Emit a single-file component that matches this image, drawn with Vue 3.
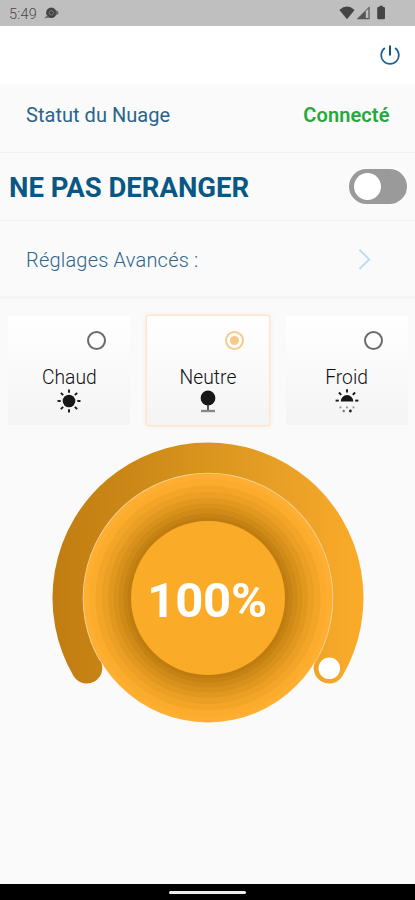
<script setup>
import { ref } from 'vue'

const level = ref(100)
const selected = ref('neutre')
const doNotDisturb = ref(false)
const modes = [
  { id: 'chaud', label: 'Chaud' },
  { id: 'neutre', label: 'Neutre' },
  { id: 'froid', label: 'Froid' },
]
const rays = [0, 45, 90, 135, 180, 225, 270, 315]
const halfRays = [-90, -45, 0, 45, 90]
const rings = [
  { r: 124.5, c: '#feaf32' },
  { r: 119, c: '#fbac2d' },
  { r: 112.5, c: '#f3a528' },
  { r: 106, c: '#eb9f24' },
  { r: 100, c: '#e2981f' },
  { r: 94.5, c: '#d8911a' },
  { r: 89.5, c: '#cf8a17' },
  { r: 84.5, c: '#c68314' },
  { r: 80.5, c: '#bf7d11' },
]
</script>

<template>
  <div class="phone">
    <header class="status-bar">
      <span class="time">5:49</span>
      <svg class="gear" width="15" height="14" viewBox="0 0 15 14">
        <circle cx="7.3" cy="6.8" r="5.2" fill="#434343" />
        <circle cx="7.3" cy="6.8" r="2.2" fill="none" stroke="#7a7a7a" />
        <path d="M.2 12.2 3.6 8.8l1.6 3zM11.5 4l2.8 1.4v2.8l-2.4.8z" fill="#6a6a6a" />
      </svg>
      <svg class="signals" width="48" height="16" viewBox="0 0 48 16">
        <path d="M.4 5Q8-1.8 15.6 5L8 14.2z" fill="#454545" />
        <path d="M17.6 14.2 30.6 1.2v13z" fill="#555" />
        <path d="M26.8 6.2 29.4 3.6v9.3h-2.6z" fill="#bfbfbf" />
        <path d="M38.2 3.2q0-1.2 1.2-1.2h1V.7h3.4V2h1q1.2 0 1.2 1.2v9.8q0 1.2-1.2 1.2h-5.4q-1.2 0-1.2-1.2z" fill="#454545" />
      </svg>
    </header>

    <div class="app-bar">
      <svg width="22" height="22" viewBox="0 0 22 22" fill="none" stroke="#1c6294" stroke-width="1.7">
        <path d="M5.9 4A8.8 8.8 0 1 0 16.1 4" />
        <path d="M11 1.6v10" stroke="#174f83" stroke-width="2" />
      </svg>
    </div>

    <div class="row cloud">
      <span class="label">Statut du Nuage</span>
      <span class="connected">Connecté</span>
    </div>

    <div class="row disturb">
      <span class="title">NE PAS DERANGER</span>
      <button class="toggle" :class="{ on: doNotDisturb }" @click="doNotDisturb = !doNotDisturb">
        <span class="thumb"></span>
      </button>
    </div>

    <div class="row advanced">
      <span class="label light">Réglages Avancés :</span>
      <svg width="14" height="22" viewBox="0 0 14 22" fill="none" stroke="#c1dbee" stroke-width="1.9">
        <path d="M1.4 1.8 11.2 11.4 1.4 21" />
      </svg>
    </div>

    <div class="modes">
      <div
        v-for="mode in modes"
        :key="mode.id"
        class="card"
        :class="{ selected: selected === mode.id }"
        @click="selected = mode.id"
      >
        <span class="radio"></span>
        <span class="mode-label">{{ mode.label }}</span>
        <svg v-if="mode.id === 'chaud'" width="26" height="26" viewBox="-13 -13 26 26">
          <circle r="6.3" fill="#171717" />
          <path v-for="a in rays" :key="a" d="M0-11.5v3.2" :transform="`rotate(${a})`" stroke="#171717" stroke-width="1.9" />
        </svg>
        <svg v-else-if="mode.id === 'neutre'" width="26" height="26" viewBox="-13 -13 26 26">
          <circle cy="-3" r="7.4" fill="#171717" />
          <path d="M0 4v5" stroke="#444" stroke-width="1.8" />
          <path d="M-7 10H7" stroke="#888" stroke-width="2.4" />
        </svg>
        <svg v-else width="26" height="26" viewBox="-13 -13 26 26">
          <path d="M-6.3.4a6.3 6.3 0 0 1 12.6 0z" fill="#171717" />
          <path v-for="a in halfRays" :key="a" d="M0-11.4v3.2" :transform="`translate(0 -.4) rotate(${a})`" stroke="#171717" stroke-width="1.9" />
          <g fill="#999">
            <circle cx="-6.5" cy="6.4" r="1.1" />
            <circle cx="0" cy="6.4" r="1.1" />
            <circle cx="6.5" cy="6.4" r="1.1" />
            <circle cx="-3.3" cy="10" r="1.2" fill="#777" />
            <circle cx="3.4" cy="10" r="1.4" fill="#222" />
          </g>
        </svg>
      </div>
    </div>

    <div class="dial">
      <svg width="312" height="282" viewBox="-156 -156 312 282">
        <defs>
          <linearGradient id="track" gradientUnits="userSpaceOnUse" x1="-155" y1="0" x2="155" y2="0">
            <stop offset="0" stop-color="#c17d10" />
            <stop offset=".25" stop-color="#cb8817" />
            <stop offset=".5" stop-color="#da951e" />
            <stop offset=".75" stop-color="#e9a026" />
            <stop offset="1" stop-color="#fbab29" />
          </linearGradient>
        </defs>
        <path d="M-121.2 70A140 140 0 1 1 121.2 70" fill="none" stroke="url(#track)" stroke-width="31" stroke-linecap="round" />
        <path d="M-107.8 62.3A124.5 124.5 0 1 1 107.8 62.3" fill="none" stroke="#f1d3a0" stroke-width="1.6" />
        <circle v-for="ring in rings" :key="ring.r" :r="ring.r" :fill="ring.c" />
        <circle r="77" fill="#faab27" />
        <circle cx="121.3" cy="70.3" r="10.8" fill="#fff" />
        <text class="percent" x="-.8" y="18.7" text-anchor="middle" textLength="120">{{ level }}%</text>
      </svg>
    </div>

    <footer class="nav-bar"><span></span></footer>
  </div>
</template>

<style>
body {
  margin: 0;
  background: #fafafa;
}
</style>

<style scoped>
.phone {
  width: 415px;
  height: 900px;
  display: flex;
  flex-direction: column;
  overflow: hidden;
  background: #fafafa;
  font-family: Roboto, sans-serif;
}
.phone * {
  box-sizing: border-box;
}
.status-bar {
  flex: none;
  height: 26px;
  display: flex;
  align-items: center;
  padding: 0 28px 0 9px;
  background: #bfbfbf;
}
.time {
  width: 35px;
  padding-top: 2px;
  font-size: 14.5px;
  font-weight: 300;
  letter-spacing: 0.2px;
  color: #484848;
}
.signals {
  margin-left: auto;
}
.app-bar {
  flex: none;
  height: 58px;
  display: flex;
  align-items: center;
  justify-content: flex-end;
  padding: 0 14px 0 0;
  background: #fff;
}
.row {
  flex: none;
  display: flex;
  align-items: center;
  justify-content: space-between;
  border-bottom: 1px solid #f1f1f1;
}
.cloud {
  height: 69px;
  padding: 0 25.5px 6px 26px;
}
.label {
  font-size: 20px;
  letter-spacing: 0.03px;
  color: #29648c;
}
.light {
  padding-top: 2px;
  letter-spacing: 0.2px;
  color: #2f658a;
  font-weight: 300;
}
.connected {
  font-size: 20px;
  font-weight: 600;
  letter-spacing: 0.1px;
  color: #25a83c;
}
.disturb {
  height: 68px;
  padding: 0 8px 0 9px;
}
.title {
  padding-top: 1px;
  font-size: 27.5px;
  font-weight: 700;
  color: #085784;
}
.toggle {
  width: 58px;
  height: 35px;
  padding: 0 5px;
  display: flex;
  align-items: center;
  border: 0;
  border-radius: 18px;
  background: #9a9a9a;
}
.toggle.on {
  justify-content: flex-end;
  background: #085784;
}
.thumb {
  width: 27px;
  height: 27px;
  border-radius: 50%;
  background: #fff;
}
.advanced {
  height: 78px;
  padding: 1px 43px 0 26px;
  border-bottom: 3px solid #f5f5f5;
}
.modes {
  flex: none;
  height: 143px;
  display: grid;
  grid-template-columns: repeat(3, 122px);
  column-gap: 16.6px;
  padding: 17px 0 17px 8.4px;
}
.card {
  display: flex;
  flex-direction: column;
  align-items: center;
  padding-top: 15px;
  border-radius: 2px;
  background: linear-gradient(#fff, #f4f4f4);
}
.card.selected {
  box-shadow: 0 0 0 1.5px #fce6cf, 0 0 4px 2px #fcefe2;
}
.radio {
  flex: none;
  align-self: flex-end;
  width: 19px;
  height: 19px;
  margin-right: 24.5px;
  display: grid;
  place-items: center;
  border: 2px solid #6b6b6b;
  border-radius: 50%;
}
.selected .radio {
  border-color: #f5cb90;
}
.selected .radio::after {
  content: '';
  width: 9px;
  height: 9px;
  border-radius: 50%;
  background: #f5c98a;
}
.mode-label {
  margin-top: 16px;
  font-size: 19.3px;
  line-height: 24px;
  font-weight: 300;
  color: #111;
}
.card svg {
  flex: none;
  margin-top: -2.5px;
}
.dial {
  flex: none;
  height: 282px;
  display: flex;
  justify-content: center;
}
.percent {
  font-size: 49px;
  font-weight: 700;
  fill: #fff;
}
.nav-bar {
  flex: none;
  height: 16px;
  margin-top: auto;
  display: flex;
  justify-content: center;
  align-items: center;
  background: #000;
}
.nav-bar span {
  width: 77px;
  height: 3px;
  margin-top: 1px;
  border-radius: 2px;
  background: #eee;
}
</style>
